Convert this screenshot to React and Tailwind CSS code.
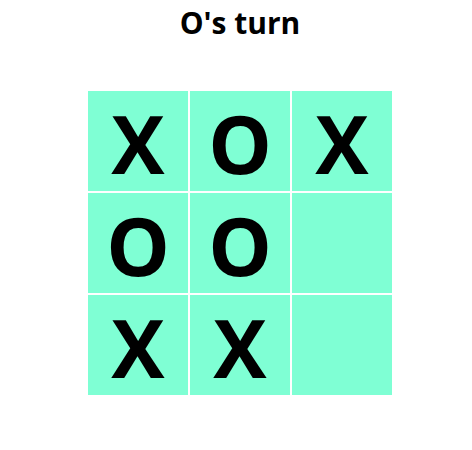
const BOARD = ['X', 'O', 'X', 'O', 'O', null, 'X', 'X', null];

function Square({ value }) {
  return (
    <button className="w-[100px] h-[100px] bg-[#7fffd4] flex items-center justify-center pt-[3px] text-[80px] font-bold leading-none text-black">
      {value}
    </button>
  );
}

export default function App() {
  return (
    <div className="w-full pl-2 flex flex-col items-center font-['Open_Sans',sans-serif]">
      <h1 className="text-[30px] font-bold leading-none mt-[8px] text-black">O's turn</h1>
      <div className="mt-[53px] grid grid-cols-[repeat(3,100px)] gap-[2px]">
        {BOARD.map((v, i) => (
          <Square key={i} value={v} />
        ))}
      </div>
    </div>
  );
}
